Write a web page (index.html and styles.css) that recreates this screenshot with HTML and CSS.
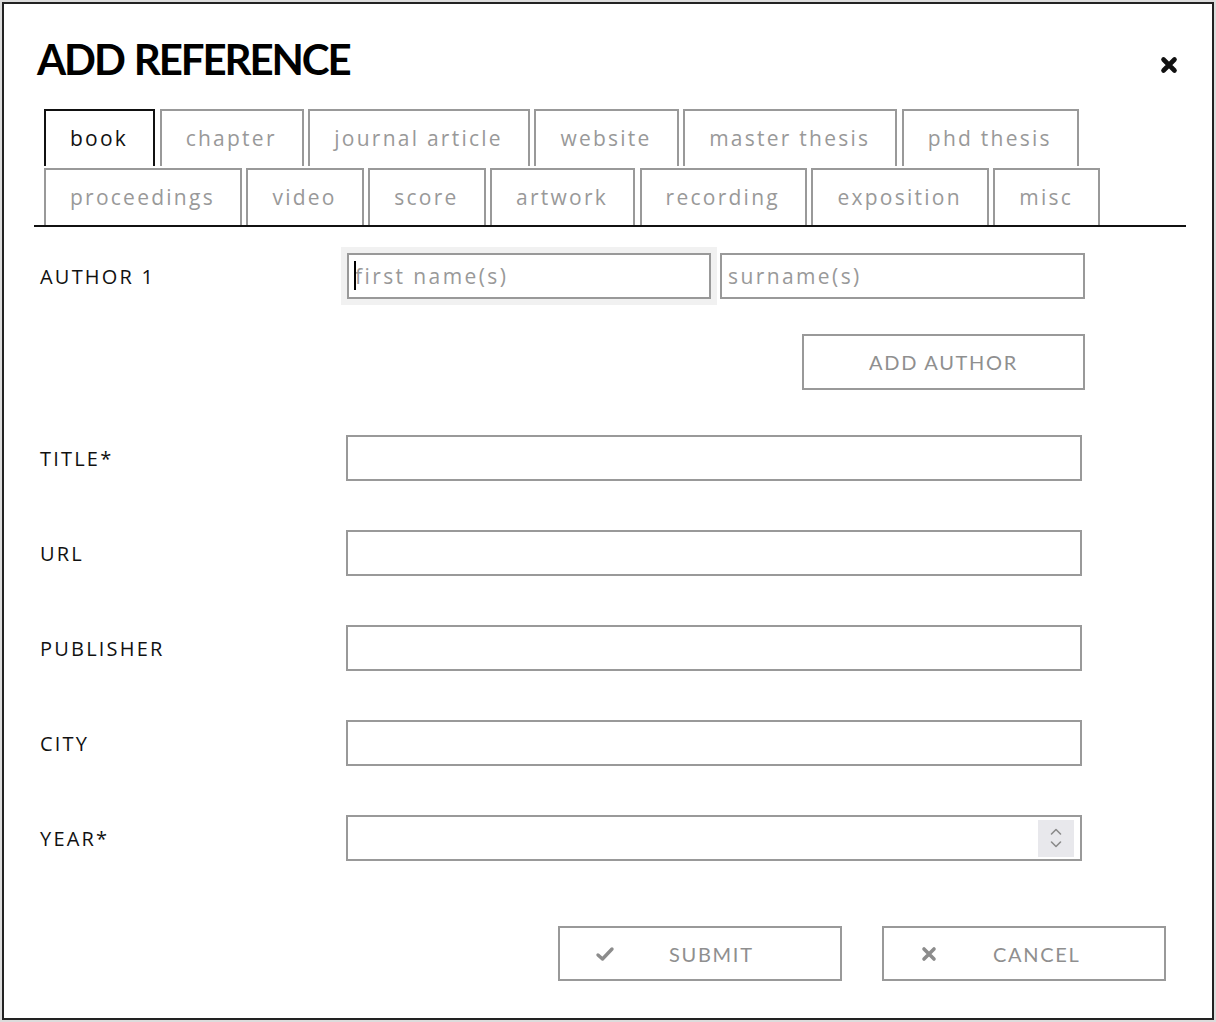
FILE: index.html
```html
<!DOCTYPE html>
<html lang="en">

<head>
    <title>Add Reference</title>
    <meta charset="UTF-8">
    <meta name="viewport" content="width=device-width, initial-scale=1.0">
    <link rel="stylesheet" href="styles.css">
</head>

<body>
    <div class="dialog">
        <div class="dialog-header">
            <h1>ADD REFERENCE</h1>
            <button type="button" class="close" aria-label="close">
                <svg width="18" height="18" viewBox="0 0 18 18">
                    <path d="M3.5 3.5 L14.5 14.5 M14.5 3.5 L3.5 14.5" stroke="#111" stroke-width="4.6" stroke-linecap="round" fill="none"/>
                </svg>
            </button>
        </div>

        <div class="tabs">
            <div class="tab-row">
                <span class="tab active">book</span>
                <span class="tab">chapter</span>
                <span class="tab">journal article</span>
                <span class="tab">website</span>
                <span class="tab">master thesis</span>
                <span class="tab">phd thesis</span>
            </div>
            <div class="tab-row">
                <span class="tab">proceedings</span>
                <span class="tab">video</span>
                <span class="tab">score</span>
                <span class="tab">artwork</span>
                <span class="tab">recording</span>
                <span class="tab">exposition</span>
                <span class="tab">misc</span>
            </div>
        </div>

        <form class="ref-form" onsubmit="return false">
            <div class="row">
                <label for="first1">AUTHOR 1</label>
                <div class="author-fields">
                    <div class="focus-wrap">
                        <input type="text" id="first1" placeholder="first name(s)">
                        <span class="caret"></span>
                    </div>
                    <input type="text" id="last1" placeholder="surname(s)">
                </div>
            </div>

            <div class="add-author">
                <button type="button" class="btn">ADD AUTHOR</button>
            </div>

            <div class="row field-row first-field">
                <label for="title">TITLE*</label>
                <input type="text" id="title" class="wide">
            </div>
            <div class="row field-row">
                <label for="url">URL</label>
                <input type="text" id="url" class="wide">
            </div>
            <div class="row field-row">
                <label for="publisher">PUBLISHER</label>
                <input type="text" id="publisher" class="wide">
            </div>
            <div class="row field-row">
                <label for="city">CITY</label>
                <input type="text" id="city" class="wide">
            </div>
            <div class="row field-row">
                <label for="year">YEAR*</label>
                <div class="number-box">
                    <input type="text" id="year">
                    <span class="spinner">
                        <svg width="14" height="26" viewBox="0 0 14 26">
                            <path d="M2.5 9 L7 4.5 L11.5 9 M2.5 17 L7 21.5 L11.5 17" stroke="#8a8a8a" stroke-width="1.6" fill="none" stroke-linecap="round" stroke-linejoin="round"/>
                        </svg>
                    </span>
                </div>
            </div>

            <div class="actions">
                <button type="submit" class="btn btn-icon">
                    <svg width="20" height="20" viewBox="0 0 20 20">
                        <path d="M3 11 L7.5 15 L17 5" stroke="#8c8c8c" stroke-width="3.4" fill="none" stroke-linecap="round" stroke-linejoin="round"/>
                    </svg>
                    <span>SUBMIT</span>
                </button>
                <button type="button" class="btn btn-icon">
                    <svg width="20" height="20" viewBox="0 0 20 20">
                        <path d="M5 5 L15 15 M15 5 L5 15" stroke="#8c8c8c" stroke-width="3.6" fill="none" stroke-linecap="round"/>
                    </svg>
                    <span>CANCEL</span>
                </button>
            </div>
        </form>
    </div>
</body>

</html>
```

FILE: styles.css
```css
body {
    margin: 2px;
    background: #dcdcdc;
    font-family: "Open Sans", sans-serif;
}

.dialog {
    width: 1212px;
    height: 1018px;
    box-sizing: border-box;
    border: 2px solid #222;
    background: #fff;
}

.dialog-header {
    display: flex;
    justify-content: space-between;
    align-items: flex-start;
    height: 71px;
    padding: 34px 34px 0 33px;
}

.dialog-header h1 {
    margin: 0;
    font-family: Lato, sans-serif;
    font-size: 42px;
    line-height: 42px;
    font-weight: bold;
    letter-spacing: -2.1px;
    word-spacing: 2px;
    color: #000;
}

.close {
    margin-top: 18px;
    padding: 0;
    border: none;
    background: none;
    width: 18px;
    height: 18px;
    cursor: pointer;
}

.close svg {
    display: block;
}

.tabs {
    margin: 0 26px 0 30px;
    padding-left: 10px;
    border-bottom: 2px solid #111;
}

.tab-row {
    display: flex;
    gap: 4.5px;
}

.tab-row + .tab-row {
    margin-top: 2px;
}

.tab {
    height: 57px;
    box-sizing: border-box;
    border: 2px solid #999;
    border-bottom: none;
    padding: 0 25px 0 24px;
    font-size: 21px;
    line-height: 55px;
    letter-spacing: 2.25px;
    color: #999;
    cursor: pointer;
}

.tab.active {
    border-color: #111;
    color: #111;
}

.ref-form {
    padding: 26px 0 0 36px;
}

.row {
    display: flex;
    align-items: center;
}

.row label {
    width: 306px;
    flex-shrink: 0;
    font-size: 20px;
    letter-spacing: 2.2px;
    color: #111;
}

input {
    height: 46px;
    box-sizing: border-box;
    border: 2px solid #999;
    padding: 0 6px;
    font-family: "Open Sans", sans-serif;
    font-size: 21px;
    letter-spacing: 2.4px;
    color: #333;
    outline: none;
}

input::placeholder {
    color: #999;
}

.author-fields {
    display: flex;
    gap: 9px;
    margin-left: 1px;
}

.author-fields input {
    width: 365px;
}

.focus-wrap {
    position: relative;
}

.focus-wrap input {
    width: 364px;
    box-shadow: 0 0 0 6px #f1f1f1;
}

.caret {
    position: absolute;
    left: 7px;
    top: 8px;
    width: 2px;
    height: 29px;
    background: #000;
}

.add-author {
    display: flex;
    margin: 35px 0 0 762px;
}

.btn {
    height: 56px;
    width: 283px;
    box-sizing: border-box;
    border: 2px solid #999;
    background: #fff;
    color: #8f8f8f;
    font-family: Lato, sans-serif;
    font-size: 20px;
    letter-spacing: 1.7px;
    cursor: pointer;
}

.field-row {
    margin-top: 49px;
}

.field-row.first-field {
    margin-top: 45px;
}

.wide {
    width: 736px;
}

.number-box {
    display: flex;
    align-items: center;
    width: 736px;
    height: 46px;
    box-sizing: border-box;
    border: 2px solid #999;
    padding-right: 6px;
}

.number-box input {
    flex: 1;
    border: none;
    height: 42px;
}

.spinner {
    display: flex;
    align-items: center;
    justify-content: center;
    width: 36px;
    height: 37px;
    background: #e8e8ec;
}

.actions {
    display: flex;
    justify-content: flex-end;
    gap: 40px;
    margin: 65px 46px 0 0;
}

.btn-icon {
    display: flex;
    align-items: center;
    width: 284px;
    height: 55px;
    padding: 0 0 0 35px;
}

.btn-icon svg {
    flex-shrink: 0;
}

.btn-icon span {
    margin-left: 54px;
}
```
